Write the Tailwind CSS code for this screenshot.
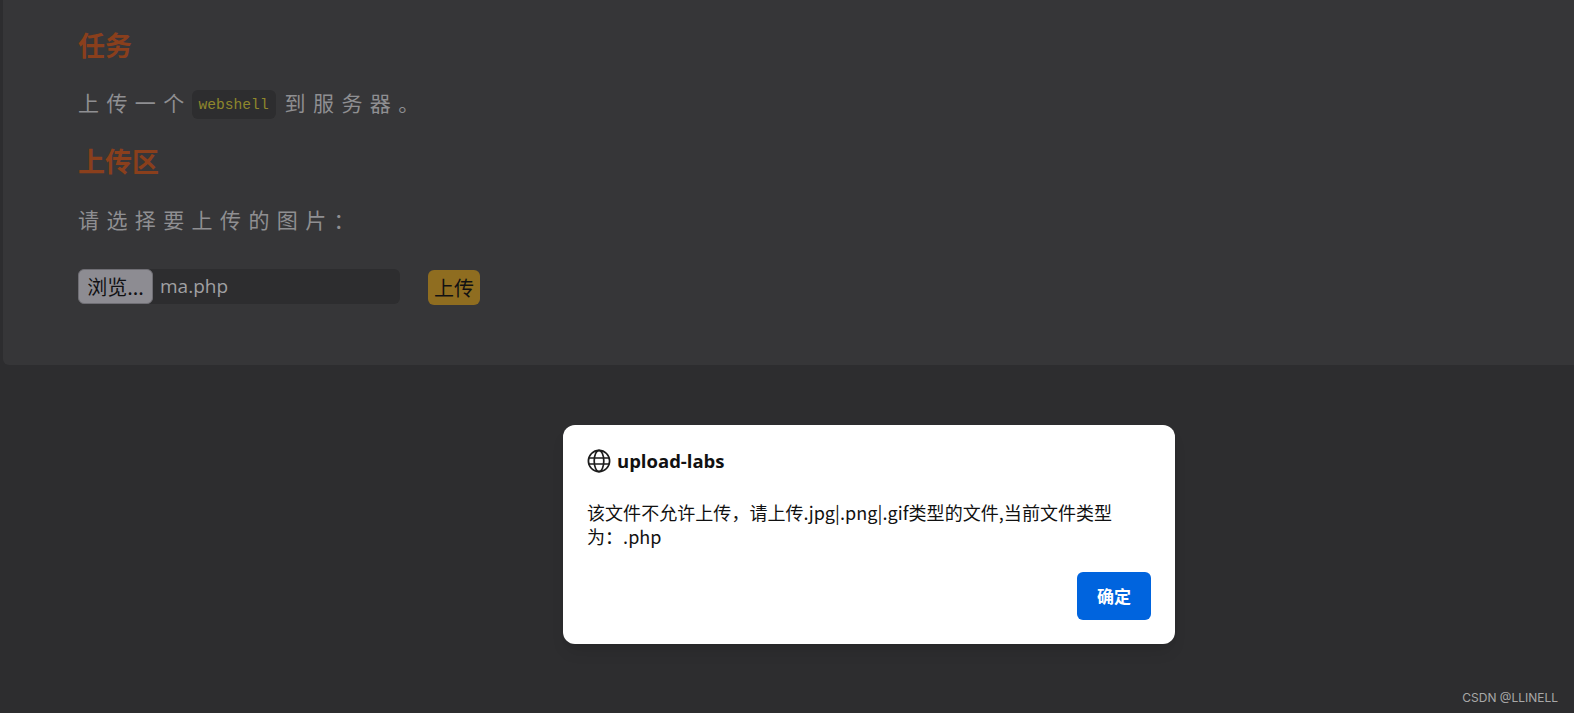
<!DOCTYPE html>
<html lang="en">

<head>
  <meta charset="UTF-8">
  <title>upload-labs</title>
  <script src="https://cdn.jsdelivr.net/npm/@tailwindcss/browser@4"></script>
</head>

<body class="bg-[#2d2d2f] h-[713px] overflow-hidden relative font-['Noto_Sans_CJK_SC',sans-serif]">

  <!-- upload card -->
  <div class="ml-[3px] h-[365px] pl-[75px] pt-[26px] bg-[#363638] rounded-bl-md">
    <h2 class="h-[38px] leading-[38px] text-[27px] font-bold text-[#8a3f1c]">任务</h2>
    <p class="mt-[24px] h-[30px] flex items-center text-[21px] tracking-[7.4px] text-[#8f8f92]">
      <span>上传一个</span>
      <code class="mt-[2px] mr-[9px] h-[29px] w-[84px] flex items-center justify-center pt-[3px] rounded-md bg-[#2d2d2f] text-[14.6px] tracking-normal text-[#8f872c] font-['Liberation_Mono',monospace]">webshell</code>
      <span>到服务器。</span>
    </p>
    <h2 class="mt-[24px] h-[38px] leading-[38px] text-[27px] font-bold text-[#8a3f1c]">上传区</h2>
    <p class="mt-[24px] h-[30px] leading-[30px] text-[21px] tracking-[7.4px] text-[#8f8f92]">请选择要上传的图片：</p>
    <div class="mt-[35px] flex items-start">
      <div class="w-[322px] h-[35px] flex items-center bg-[#2d2d2f] rounded-md">
        <button class="w-[75px] h-[35px] shrink-0 rounded-md border border-[#6f6e74] bg-[#8d8c92] text-[20px] text-[#111113]">浏览...</button>
        <span class="ml-[7px] text-[19px] text-[#a0a0a3] font-['Open_Sans',sans-serif]">ma.php</span>
      </div>
      <button class="ml-[28px] mt-[1px] w-[52px] h-[35px] rounded-md bg-[#8f6d20] text-[20px] text-[#111113]">上传</button>
    </div>
  </div>

  <!-- alert dialog -->
  <div class="absolute left-[563px] top-[425px] w-[612px] h-[219px] bg-white rounded-xl shadow-lg px-[24px] pt-[24px] text-[#111]">
    <div class="flex items-center gap-[6px] h-[24px]">
      <svg class="w-[24px] h-[24px]" viewBox="0 0 24 24" fill="none" stroke="#1c1c1c" stroke-width="1.7">
        <circle cx="12" cy="12" r="10.6"></circle>
        <ellipse cx="12" cy="12" rx="4.8" ry="10.6"></ellipse>
        <path d="M1.6 9h20.8M1.6 15h20.8"></path>
      </svg>
      <span class="text-[18.5px] font-bold font-['Open_Sans',sans-serif]">upload-labs</span>
    </div>
    <p class="mt-[27px] w-[530px] text-[18px] tracking-[0.05px] leading-[24px]">该文件不允许上传，请上传.jpg|.png|.gif类型的文件,当前文件类型为：.php</p>
    <div class="mt-[24px] flex justify-end">
      <button class="w-[74px] h-[48px] rounded-md bg-[#0064de] text-white text-[17px] font-bold">确定</button>
    </div>
  </div>

  <span class="absolute right-[16px] bottom-[6px] text-[12px] text-[#a8a8a8] font-['Inter',sans-serif]">CSDN @LLINELL</span>

</body>

</html>
